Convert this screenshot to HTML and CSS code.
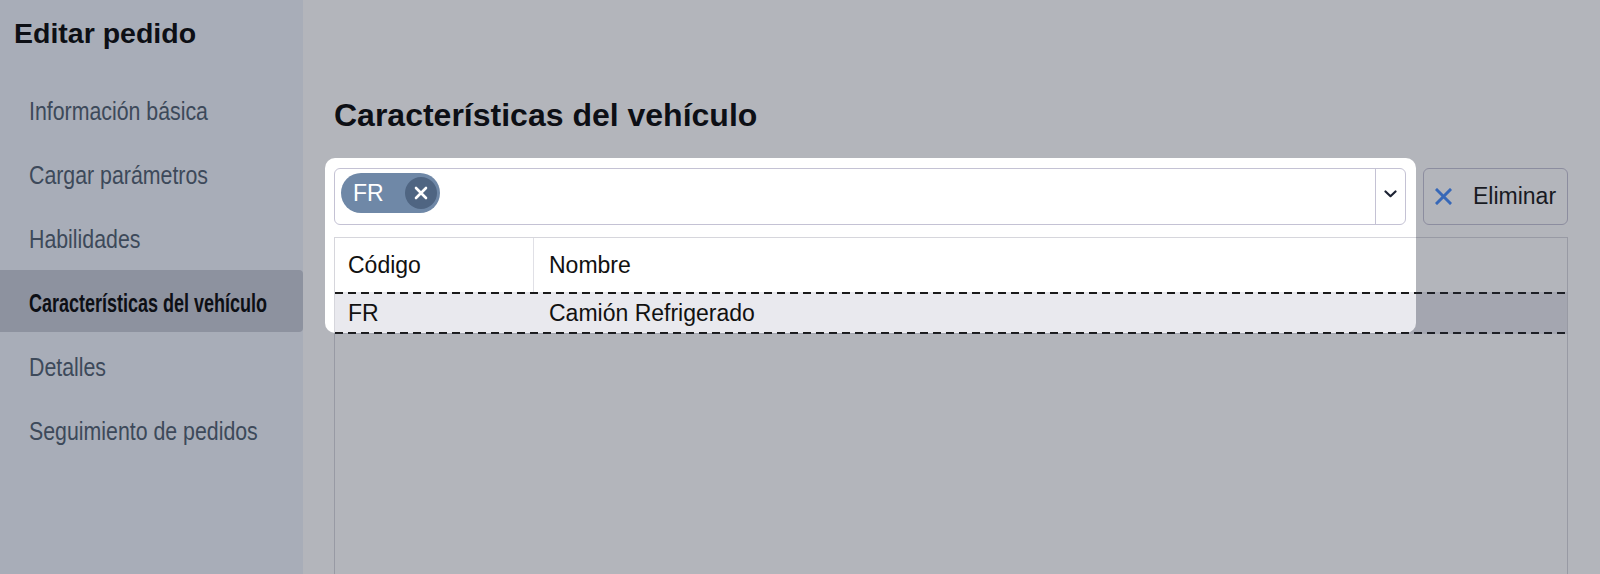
FILE: index.html
```html
<!DOCTYPE html>
<html lang="es">
<head>
<meta charset="utf-8">
<title>Editar pedido</title>
<link rel="stylesheet" href="styles.css">
</head>
<body>
<div class="app">
  <aside class="sidebar">
    <h1 class="side-title">Editar pedido</h1>
    <nav class="nav">
      <a class="nav-item"><span class="nav-label">Información básica</span></a>
      <a class="nav-item"><span class="nav-label">Cargar parámetros</span></a>
      <a class="nav-item"><span class="nav-label">Habilidades</span></a>
      <a class="nav-item active"><span class="nav-label">Características del vehículo</span></a>
      <a class="nav-item"><span class="nav-label">Detalles</span></a>
      <a class="nav-item"><span class="nav-label">Seguimiento de pedidos</span></a>
    </nav>
  </aside>
  <main class="main">
    <h2 class="page-title">Características del vehículo</h2>
    <div class="toolbar">
      <div class="select-wrap">
        <div class="select">
          <div class="select-value">
            <span class="chip">FR<span class="chip-close"><svg width="14" height="14" viewBox="0 0 14 14"><path d="M2 2L12 12M12 2L2 12" stroke="#fff" stroke-width="2.6" stroke-linecap="round"/></svg></span></span>
          </div>
          <div class="select-arrow"><svg width="13" height="8" viewBox="0 0 13 8"><path d="M1.5 1.5L6.5 6.2L11.5 1.5" fill="none" stroke="#1c2233" stroke-width="2.2" stroke-linecap="round" stroke-linejoin="round"/></svg></div>
        </div>
        <div class="spotlight"></div>
      </div>
      <button class="btn-delete"><svg width="17" height="17" viewBox="0 0 17 17"><path d="M2 2L15 15M15 2L2 15" stroke="#4189fa" stroke-width="3" stroke-linecap="square"/></svg><span>Eliminar</span></button>
    </div>
    <div class="table">
      <div class="thead">
        <div class="cell c1">Código</div>
        <div class="cell c2">Nombre</div>
      </div>
      <div class="row selected">
        <div class="cell c1">FR</div>
        <div class="cell c2">Camión Refrigerado</div>
      </div>
      <div class="tbody-empty"></div>
    </div>
  </main>
</div>
</body>
</html>
```
FILE: styles.css
```css
html, body {
  margin: 0;
  padding: 0;
}
body {
  font-family: "Liberation Sans", Arial, sans-serif;
  background: #fff;
  color: #111;
}
.app {
  display: flex;
  height: 574px;
  overflow: hidden;
}
.sidebar {
  width: 303px;
  flex: none;
  background: #eff3fa;
}
.side-title {
  margin: 0;
  padding: 16px 0 0 14px;
  font-size: 28.5px;
  line-height: 34px;
  font-weight: bold;
  color: #000;
}
.nav {
  display: flex;
  flex-direction: column;
  gap: 2px;
  margin-top: 28px;
}
.nav-item {
  height: 62px;
  box-sizing: border-box;
  display: flex;
  align-items: center;
  padding: 4px 0 0 29px;
  font-size: 26px;
  color: #4a5a6b;
  white-space: nowrap;
}
.nav-label {
  display: inline-block;
  transform: scaleX(0.82);
  transform-origin: left center;
}
.nav-item.active {
  background: #c5c9d4;
  font-weight: bold;
  font-size: 25px;
  color: #000;
  border-radius: 0 4px 4px 0;
}
.nav-item.active .nav-label {
  transform: scaleX(0.72);
}
.main {
  flex: 1;
  display: flex;
  flex-direction: column;
  padding: 96px 32px 0 31px;
  min-width: 0;
}
.page-title {
  margin: 0;
  font-size: 32px;
  line-height: 38px;
  font-weight: bold;
  color: #000;
}
.toolbar {
  display: flex;
  gap: 17px;
  margin-top: 34px;
  height: 57px;
}
.select-wrap {
  flex: 1;
  position: relative;
}
.select {
  height: 57px;
  box-sizing: border-box;
  border: 1px solid #c4c2d4;
  border-radius: 6px;
  background: #fff;
  display: flex;
}
.select-value {
  flex: 1;
  display: flex;
  align-items: flex-start;
  padding: 4px 6px;
}
.chip {
  height: 40px;
  box-sizing: border-box;
  border-radius: 20px;
  background: #6f88a7;
  color: #fff;
  font-size: 23px;
  display: inline-flex;
  align-items: center;
  gap: 21px;
  padding: 0 3px 0 12px;
}
.chip-close {
  width: 32px;
  height: 32px;
  border-radius: 50%;
  background: #4f6582;
  display: flex;
  align-items: center;
  justify-content: center;
}
.select-arrow {
  width: 30px;
  border-left: 1px solid #c4c2d4;
  display: flex;
  align-items: center;
  justify-content: center;
  padding-bottom: 6px;
  box-sizing: border-box;
}
.spotlight {
  position: absolute;
  top: -10px;
  left: -9px;
  right: -10px;
  height: 175px;
  border-radius: 10px;
  box-shadow: 0 0 0 3000px rgba(38, 44, 61, 0.35);
  pointer-events: none;
  z-index: 5;
}
.btn-delete {
  width: 145px;
  height: 57px;
  box-sizing: border-box;
  border: 1px solid #c4c2d4;
  border-radius: 6px;
  background: #fff;
  display: flex;
  align-items: center;
  gap: 21px;
  padding: 0 0 0 11px;
  font-family: "Liberation Sans", Arial, sans-serif;
  font-size: 23px;
  color: #111;
}
.table {
  flex: 1;
  margin-top: 12px;
  border: 1px solid #d6d6dc;
  border-bottom: none;
  display: flex;
  flex-direction: column;
  background: #fff;
}
.thead {
  display: flex;
  height: 54px;
  flex: none;
}
.row {
  display: flex;
  height: 42px;
  flex: none;
}
.cell {
  display: flex;
  align-items: center;
  font-size: 23px;
  color: #111;
}
.c1 {
  width: 199px;
  box-sizing: border-box;
  padding-left: 13px;
}
.c2 {
  flex: 1;
  padding-left: 15px;
}
.thead .c1 {
  border-right: 1px solid #e0e0e6;
}
.row.selected {
  background:
    repeating-linear-gradient(90deg, #1a1a1a 0 8px, transparent 8px 13px) left top / 100% 2px no-repeat,
    repeating-linear-gradient(90deg, #1a1a1a 0 8px, transparent 8px 13px) left bottom / 100% 2px no-repeat,
    #e9e9ee;
}
.tbody-empty {
  flex: 1;
}
```
